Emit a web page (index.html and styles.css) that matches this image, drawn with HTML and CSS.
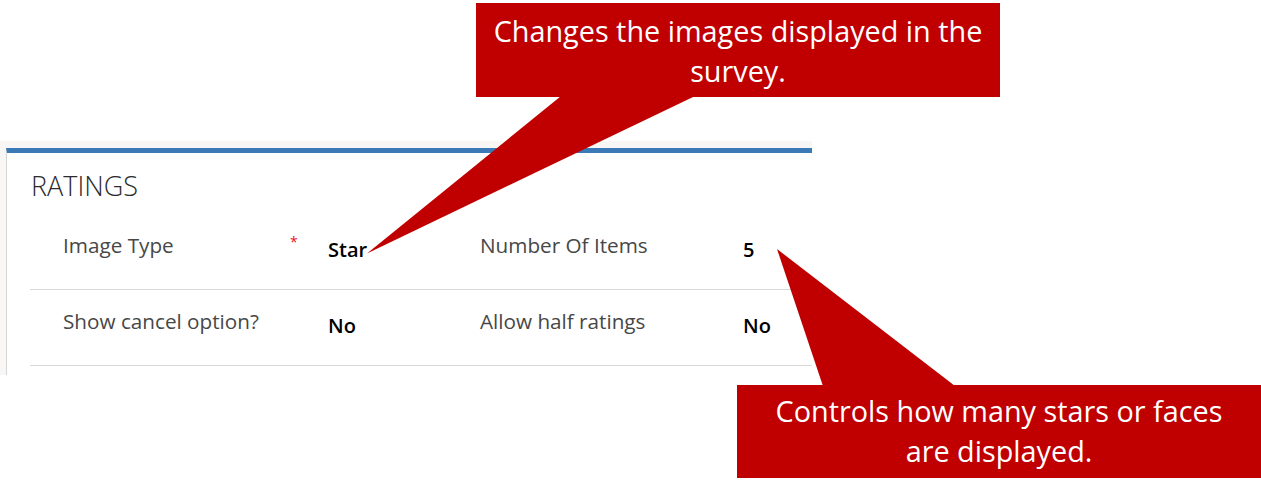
FILE: index.html
```html
<!DOCTYPE html>
<html lang="en">
<head>
<meta charset="utf-8">
<title>Ratings</title>
<link rel="stylesheet" href="styles.css">
</head>
<body>
<div class="page">
  <section class="panel-wrap">
    <div class="card">
      <h2 class="title">RATINGS</h2>
      <div class="rows">
        <div class="row">
          <span class="label">Image Type</span>
          <span class="req">*</span>
          <span class="value">Star</span>
          <span class="label">Number Of Items</span>
          <span class="value">5</span>
        </div>
        <div class="row">
          <span class="label">Show cancel option?</span>
          <span class="req"></span>
          <span class="value">No</span>
          <span class="label">Allow half ratings</span>
          <span class="value">No</span>
        </div>
      </div>
    </div>
  </section>

  <svg class="tails" width="1261" height="492" viewBox="0 0 1261 492" aria-hidden="true">
    <polygon points="566,92 703.5,92 367,253.5" fill="#c00000"/>
    <polygon points="777,249 824.3,390 960.2,390" fill="#c00000"/>
  </svg>

  <div class="callout callout-top">Changes the images displayed in the<br>survey.</div>
  <div class="callout callout-bottom">Controls how many stars or faces<br>are displayed.</div>
</div>
</body>
</html>
```

FILE: styles.css
```css
html, body {
  margin: 0;
  padding: 0;
  background: #ffffff;
}

.page {
  position: relative;
  width: 1261px;
  height: 492px;
  padding-top: 141px;
  box-sizing: border-box;
  overflow: hidden;
  font-family: "Open Sans", "Noto Sans", sans-serif;
}

.panel-wrap {
  width: 812px;
  height: 234px;
  padding-top: 7px;
  box-sizing: border-box;
  background: #f8f7f6;
}

.card {
  margin-left: 6px;
  height: 227px;
  box-sizing: border-box;
  background: #ffffff;
  border-left: 1px solid #d6d6d6;
  border-top: 5px solid #3b79b7;
}

.title {
  margin: 17px 0 0 0;
  padding-left: 24px;
  font-size: 27px;
  line-height: 32px;
  font-weight: 300;
  color: #2b2b2b;
}

.rows {
  margin: 12px 0 0 23px;
}

.row {
  display: grid;
  grid-template-columns: 227px 38px 152px 263px 1fr;
  padding-left: 33px;
  height: 76px;
  box-sizing: border-box;
  border-bottom: 1px solid #d9d9d9;
}

.label {
  padding-top: 17px;
  font-size: 20.7px;
  line-height: 28px;
  color: #474747;
  white-space: nowrap;
}

.value {
  padding-top: 22px;
  font-size: 20px;
  line-height: 28px;
  font-weight: 600;
  color: #000000;
  white-space: nowrap;
}

.req {
  padding-top: 18px;
  font-size: 14px;
  line-height: 20px;
  color: #e81123;
}

.tails {
  position: absolute;
  left: 0;
  top: 0;
}

.callout {
  position: absolute;
  width: 524px;
  box-sizing: border-box;
  background: #c00000;
  color: #ffffff;
  text-align: center;
  font-family: "Open Sans", "Lato", sans-serif;
  font-size: 28.8px;
  line-height: 40px;
}

.callout-top {
  left: 476px;
  top: 3px;
  height: 94px;
  padding-top: 8px;
}

.callout-bottom {
  left: 737px;
  top: 385px;
  height: 93px;
  padding-top: 6px;
}
```
